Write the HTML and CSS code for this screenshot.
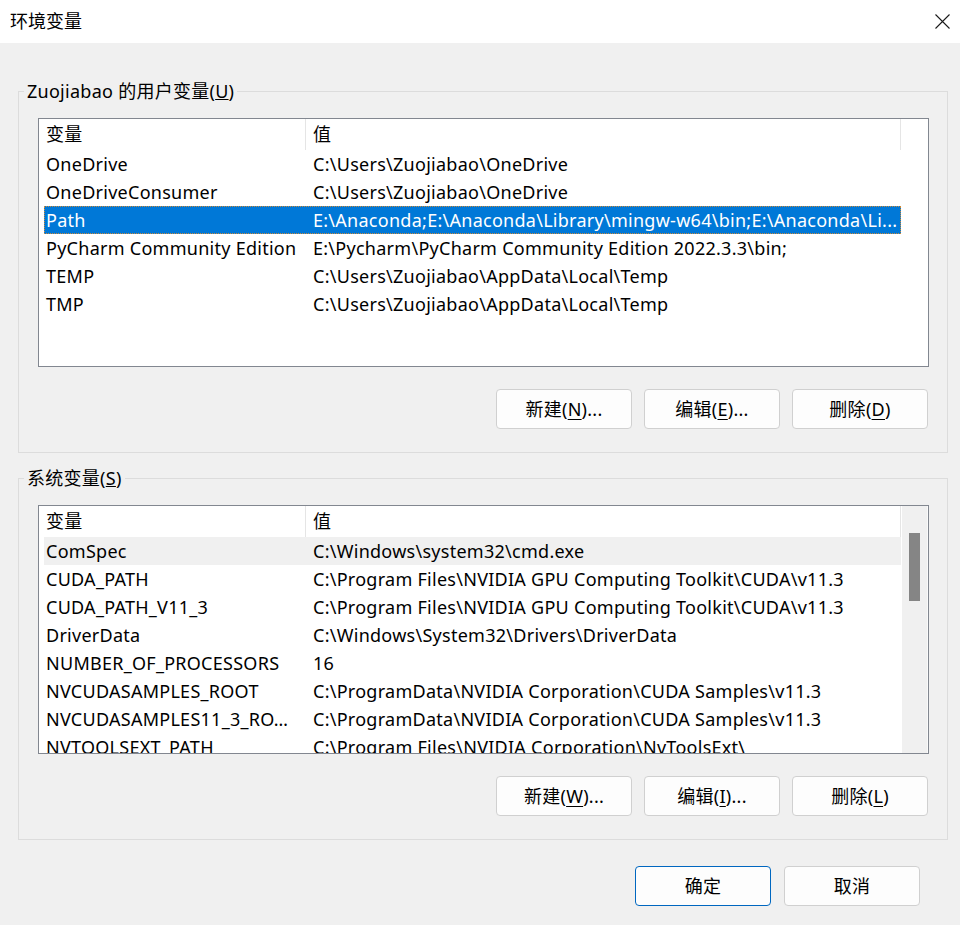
FILE: index.html
```html
<!DOCTYPE html>
<html lang="zh-CN">
<head>
<meta charset="utf-8">
<title>环境变量</title>
<link rel="stylesheet" href="styles.css">
</head>
<body>
<div class="window">
  <header class="titlebar">
    <span class="title">环境变量</span>
    <span class="close" aria-label="关闭">
      <svg width="15" height="15" viewBox="0 0 15 15"><path d="M0.5 0.5 L14.5 14.5 M14.5 0.5 L0.5 14.5" stroke="#1a1a1a" stroke-width="1.1" fill="none"/></svg>
    </span>
  </header>
  <main class="content">
    <fieldset class="group">
      <legend>Zuojiabao 的用户变量(<u>U</u>)</legend>
      <div class="group-inner">
        <div class="listview">
          <div class="lv-main">
            <div class="lv-header"><div class="c1">变量</div><div class="c2">值</div></div>
            <div class="lv-row"><div class="c1">OneDrive</div><div class="c2">C:\Users\Zuojiabao\OneDrive</div></div>
            <div class="lv-row"><div class="c1">OneDriveConsumer</div><div class="c2">C:\Users\Zuojiabao\OneDrive</div></div>
            <div class="lv-row selected"><div class="c1">Path</div><div class="c2">E:\Anaconda;E:\Anaconda\Library\mingw-w64\bin;E:\Anaconda\Li...</div></div>
            <div class="lv-row"><div class="c1">PyCharm Community Edition</div><div class="c2">E:\Pycharm\PyCharm Community Edition 2022.3.3\bin;</div></div>
            <div class="lv-row"><div class="c1">TEMP</div><div class="c2">C:\Users\Zuojiabao\AppData\Local\Temp</div></div>
            <div class="lv-row"><div class="c1">TMP</div><div class="c2">C:\Users\Zuojiabao\AppData\Local\Temp</div></div>
          </div>
        </div>
        <div class="btn-row">
          <button class="btn">新建(<u>N</u>)...</button>
          <button class="btn">编辑(<u>E</u>)...</button>
          <button class="btn">删除(<u>D</u>)</button>
        </div>
      </div>
    </fieldset>

    <fieldset class="group group-sys">
      <legend>系统变量(<u>S</u>)</legend>
      <div class="group-inner">
        <div class="listview">
          <div class="lv-main">
            <div class="lv-header"><div class="c1">变量</div><div class="c2">值</div></div>
            <div class="lv-row hover"><div class="c1">ComSpec</div><div class="c2">C:\Windows\system32\cmd.exe</div></div>
            <div class="lv-row"><div class="c1">CUDA_PATH</div><div class="c2">C:\Program Files\NVIDIA GPU Computing Toolkit\CUDA\v11.3</div></div>
            <div class="lv-row"><div class="c1">CUDA_PATH_V11_3</div><div class="c2">C:\Program Files\NVIDIA GPU Computing Toolkit\CUDA\v11.3</div></div>
            <div class="lv-row"><div class="c1">DriverData</div><div class="c2">C:\Windows\System32\Drivers\DriverData</div></div>
            <div class="lv-row"><div class="c1">NUMBER_OF_PROCESSORS</div><div class="c2">16</div></div>
            <div class="lv-row"><div class="c1">NVCUDASAMPLES_ROOT</div><div class="c2">C:\ProgramData\NVIDIA Corporation\CUDA Samples\v11.3</div></div>
            <div class="lv-row"><div class="c1">NVCUDASAMPLES11_3_RO…</div><div class="c2">C:\ProgramData\NVIDIA Corporation\CUDA Samples\v11.3</div></div>
            <div class="lv-row"><div class="c1">NVTOOLSEXT_PATH</div><div class="c2">C:\Program Files\NVIDIA Corporation\NvToolsExt\</div></div>
          </div>
          <div class="scrollbar"><div class="thumb"></div></div>
        </div>
        <div class="btn-row">
          <button class="btn">新建(<u>W</u>)...</button>
          <button class="btn">编辑(<u>I</u>)...</button>
          <button class="btn">删除(<u>L</u>)</button>
        </div>
      </div>
    </fieldset>

    <div class="dialog-buttons">
      <button class="btn btn-default">确定</button>
      <button class="btn">取消</button>
    </div>
  </main>
</div>
</body>
</html>
```
FILE: styles.css
```css
* { box-sizing: border-box; }

html, body {
  margin: 0;
  padding: 0;
}

body {
  width: 960px;
  height: 925px;
  overflow: hidden;
  background: #f0f0f0;
  font-family: "Noto Sans", "Noto Sans CJK SC", sans-serif;
  font-size: 18px;
  letter-spacing: 0.27px;
  color: #000;
}

.window {
  width: 960px;
  height: 925px;
  background: #f0f0f0;
}

.titlebar {
  height: 43px;
  background: #ffffff;
  display: flex;
  align-items: center;
  justify-content: space-between;
  padding: 0 10px 2px 10px;
}

.title {
  font-size: 18px;
  line-height: 24px;
  letter-spacing: 0;
}

.close {
  display: flex;
  width: 15px;
  height: 15px;
  margin-top: 2px;
}

.content {
  padding: 34px 12px 0 18px;
}

.group {
  margin: 0;
  padding: 0;
  min-width: 0;
  width: 930px;
  border: 1px solid #dcdcdc;
}

.group legend {
  margin-left: 5px;
  padding: 0 3px;
  line-height: 28px;
  font-size: 18px;
}

.group-sys {
  margin-top: 11px;
}

.group-inner {
  padding: 13px 18px 23px 19px;
}

.listview {
  height: 249px;
  border: 1px solid #828790;
  background: #ffffff;
  display: flex;
  overflow: hidden;
}

.lv-main {
  flex: 1;
  padding-left: 5px;
  overflow: hidden;
}

.lv-header,
.lv-row {
  display: flex;
  width: 857px;
  white-space: nowrap;
}

.lv-header {
  height: 31px;
  line-height: 31px;
}

.lv-header .c1 {
  width: 262px;
  padding-left: 2px;
  border-right: 1px solid #e5e5e5;
}

.lv-header .c2 {
  width: 595px;
  padding-left: 7px;
  border-right: 1px solid #e5e5e5;
}

.lv-row {
  height: 28px;
  line-height: 28px;
}

.lv-row .c1 {
  width: 262px;
  padding-left: 2px;
  overflow: hidden;
}

.lv-row .c2 {
  flex: 1;
  padding-left: 7px;
  overflow: hidden;
}

.lv-row.selected {
  background: #0078d7;
  color: #ffffff;
  outline: 1px dotted #c98a3c;
  outline-offset: -1px;
}

.lv-row.hover {
  background: #f0f0f0;
}

.scrollbar {
  width: 26px;
  margin-left: 1px;
  background: #f0f0f0;
  padding: 27px 0 0 7px;
  border-right: 1px solid #fafafa;
}

.thumb {
  width: 11px;
  height: 68px;
  background: #858585;
}

.btn-row {
  display: flex;
  justify-content: flex-end;
  gap: 12px;
  margin-top: 22px;
  margin-right: 1px;
}

.btn {
  width: 136px;
  height: 40px;
  padding: 0;
  background: #fdfdfd;
  border: 1px solid #d0d0d0;
  border-radius: 4px;
  font-family: "Noto Sans", "Noto Sans CJK SC", sans-serif;
  font-size: 18px;
  letter-spacing: 0.27px;
  line-height: 38px;
  color: #000;
}

.btn u {
  text-decoration-thickness: 1px;
  text-underline-offset: 3px;
}

.btn-default {
  border-color: #0067c0;
}

.dialog-buttons {
  display: flex;
  justify-content: flex-end;
  gap: 13px;
  margin-top: 26px;
  padding-right: 28px;
}
```
